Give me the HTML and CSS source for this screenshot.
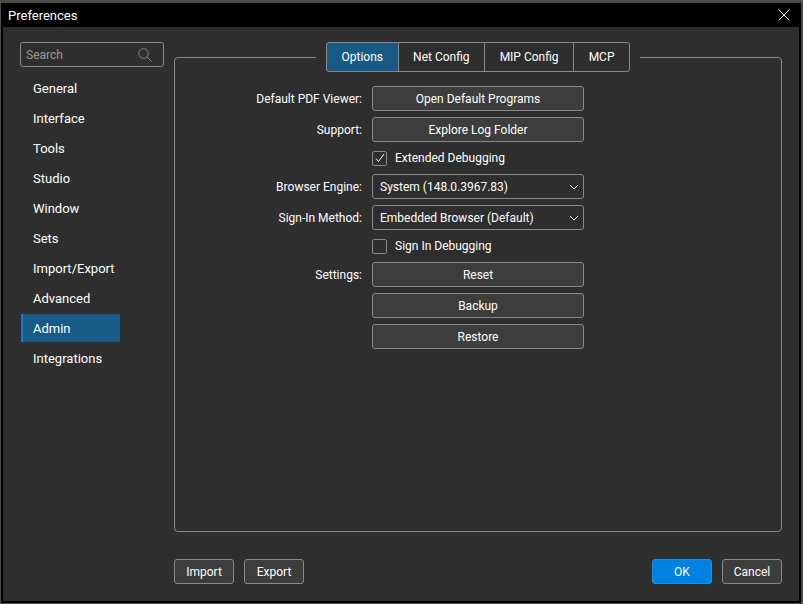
FILE: index.html
```html
<!DOCTYPE html>
<html lang="en">
  <head>
    <meta charset="UTF-8" />
    <meta name="viewport" content="width=device-width, initial-scale=1.0" />
    <title>Preferences</title>
    <link rel="stylesheet" href="styles.css">
  </head>
  <body>
    <div class="window">
      <header class="titlebar">
        <h1>Preferences</h1>
        <button class="close" type="button" aria-label="Close">
          <svg width="12" height="12" viewBox="0 0 12 12">
            <path d="M0.5 0.5L11.5 11.5M11.5 0.5L0.5 11.5" />
          </svg>
        </button>
      </header>

      <div class="content">
        <aside class="sidebar">
          <div class="search">
            <input type="text" placeholder="Search" aria-label="Search" />
            <svg width="14" height="14" viewBox="0 0 14 14">
              <circle cx="5.5" cy="5.5" r="4.8" />
              <path d="M9 9L13.6 13.6" />
            </svg>
          </div>
          <nav>
            <a href="#">General</a>
            <a href="#">Interface</a>
            <a href="#">Tools</a>
            <a href="#">Studio</a>
            <a href="#">Window</a>
            <a href="#">Sets</a>
            <a href="#">Import/Export</a>
            <a href="#">Advanced</a>
            <a href="#" class="active">Admin</a>
            <a href="#">Integrations</a>
          </nav>
        </aside>

        <main>
          <section class="panel">
            <div class="tabs">
              <button type="button" class="active">Options</button>
              <button type="button">Net Config</button>
              <button type="button">MIP Config</button>
              <button type="button">MCP</button>
            </div>

            <form class="options">
              <label for="pdfViewer">Default PDF Viewer:</label>
              <button type="button" class="btn" id="pdfViewer">Open Default Programs</button>

              <label for="support">Support:</label>
              <button type="button" class="btn" id="support">Explore Log Folder</button>

              <label class="check">
                <input type="checkbox" checked />
                <svg width="10" height="10" viewBox="0 0 10 10"><path d="M1 5.5L3.5 8.5L9 1" /></svg>
                Extended Debugging
              </label>

              <label for="engine">Browser Engine:</label>
              <div class="select">
                <select id="engine">
                  <option>System (148.0.3967.83)</option>
                </select>
                <svg width="10" height="6" viewBox="0 0 10 6"><path d="M1 1L5 5L9 1" /></svg>
              </div>

              <label for="signIn">Sign-In Method:</label>
              <div class="select">
                <select id="signIn">
                  <option>Embedded Browser (Default)</option>
                </select>
                <svg width="10" height="6" viewBox="0 0 10 6"><path d="M1 1L5 5L9 1" /></svg>
              </div>

              <label class="check">
                <input type="checkbox" />
                <svg width="10" height="10" viewBox="0 0 10 10"><path d="M1 5.5L3.5 8.5L9 1" /></svg>
                Sign In Debugging
              </label>

              <label for="reset">Settings:</label>
              <button type="button" class="btn" id="reset">Reset</button>
              <button type="button" class="btn">Backup</button>
              <button type="button" class="btn">Restore</button>
            </form>
          </section>

          <footer>
            <button type="button" class="btn">Import</button>
            <button type="button" class="btn">Export</button>
            <button type="button" class="btn primary">OK</button>
            <button type="button" class="btn">Cancel</button>
          </footer>
        </main>
      </div>
    </div>
  </body>
</html>
```
FILE: styles.css
```css
* {
  box-sizing: border-box;
}

body {
  margin: 0;
  padding: 3px 2px 1px 1px;
  height: 100vh;
  background-color: #4d4d4d;
  color: #ffffff;
  font-family: Roboto, sans-serif;
  font-size: 12px;
}

button,
input,
select {
  margin: 0;
  font: inherit;
  color: inherit;
}

svg {
  fill: none;
  stroke: #ffffff;
}

.window {
  display: flex;
  flex-direction: column;
  height: 100%;
  border: 2px solid #000000;
  border-top: none;
  background-color: #2e2e2e;
}

.titlebar {
  display: flex;
  justify-content: space-between;
  align-items: center;
  height: 24px;
  padding: 0 9px 0 5px;
  background-color: #000000;
}

.titlebar h1 {
  margin: 0;
  font-size: 13px;
  font-weight: normal;
}

.close {
  display: flex;
  padding: 0;
  border: none;
  background: none;
}

.content {
  flex: 1;
  display: flex;
  gap: 10px;
  padding: 15px 17px 17px;
}

/* Left column */
.sidebar {
  width: 144px;
}

.search {
  display: flex;
  align-items: center;
  height: 25px;
  padding: 0 11px 0 5px;
  border: 1px solid #8a8a8a;
  border-radius: 3px;
}

.search input {
  flex: 1;
  min-width: 0;
  padding: 0;
  border: none;
  outline: none;
  background: none;
}

.search input::placeholder {
  color: #9a9a9a;
}

.search svg {
  stroke: #8a8a8a;
}

nav {
  display: flex;
  flex-direction: column;
  gap: 2px;
  width: 99px;
  margin: 7px 0 0 1px;
  font-size: 13px;
}

nav a {
  padding: 2px 0 0 10px;
  border-left: 2px solid transparent;
  line-height: 26px;
  color: #ffffff;
  text-decoration: none;
}

nav a.active {
  border-color: #0083e0;
  background-color: #185a86;
}

/* Right column */
main {
  flex: 1;
  display: flex;
  flex-direction: column;
  gap: 27px;
  padding-top: 15px;
}

.panel {
  flex: 1;
  border: 1px solid #8a8a8a;
  border-radius: 4px;
}

/* Tabs sit on the top border of the panel */
.tabs {
  display: flex;
  width: 324px;
  margin: -16px auto 0;
  padding: 0 10px;
  background-color: #2e2e2e;
}

.tabs button {
  flex: 1 0 auto;
  height: 30px;
  margin-left: -1px;
  padding: 0 14px;
  border: 1px solid #8a8a8a;
  background: none;
}

.tabs button:first-child {
  margin-left: 0;
  border-radius: 3px 0 0 3px;
}

.tabs button:last-child {
  border-radius: 0 3px 3px 0;
}

.tabs button.active {
  background-color: #185a86;
}

.options {
  display: grid;
  grid-template-columns: 1fr 212px 1fr;
  align-items: center;
  gap: 6px 10px;
  margin-top: 14px;
}

.options > label {
  grid-column: 1;
  text-align: right;
}

.options > .btn,
.options > .select,
.options > .check {
  grid-column: 2;
}

.btn {
  height: 25px;
  padding: 0;
  border: 1px solid #8a8a8a;
  border-radius: 3px;
  background-color: #3d3d3d;
}

.options > .check {
  display: grid;
  grid-template-columns: 15px 1fr;
  align-items: center;
  gap: 8px;
  height: 20px;
  text-align: left;
}

.check input {
  appearance: none;
  grid-area: 1 / 1;
  width: 15px;
  height: 15px;
  border: 1px solid #8a8a8a;
  border-radius: 2px;
}

.check svg {
  grid-area: 1 / 1;
  justify-self: center;
  visibility: hidden;
}

.check input:checked + svg {
  visibility: visible;
}

.select {
  display: grid;
  align-items: center;
}

.select select {
  appearance: none;
  grid-area: 1 / 1;
  height: 25px;
  padding: 0 24px 0 7px;
  border: 1px solid #8a8a8a;
  border-radius: 3px;
  background-color: #2e2e2e;
}

.select svg {
  grid-area: 1 / 1;
  justify-self: end;
  margin-right: 5px;
  pointer-events: none;
}

footer {
  display: flex;
  gap: 10px;
}

footer .btn {
  width: 60px;
}

footer .primary {
  margin-left: auto;
  border-color: #0f96f5;
  background-color: #0083e0;
}
```
